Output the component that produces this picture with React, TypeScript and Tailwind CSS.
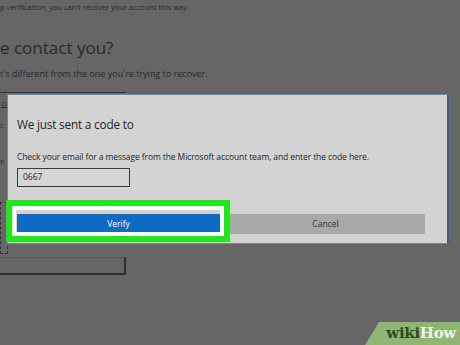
export default function App() {
  return (
    <div
      className="relative h-[345px] w-[460px] overflow-hidden bg-[#666666] text-[#2a2a2a]"
      style={{ fontFamily: '"Open Sans", "Noto Sans", sans-serif' }}
    >
      {/* page behind the dialog */}
      <div className="flex flex-col">
        <p className="mt-[2px] text-[7.5px] leading-[10px]">
          p verification, you can't recover your account this way.
        </p>
        <h2 className="mt-[25px] text-[17px] leading-[22px]">e contact you?</h2>
        <p className="mt-[9px] text-[9px] leading-[12px]">
          t's different from the one you're trying to recover.
        </p>
        <div className="mt-[12px] h-[22px] w-[126px] border-t border-[#333] pl-[1px] text-[8px] leading-[20px] underline">
          cc
        </div>
        <p className="mt-[6px] text-[8px] leading-[10px]">c</p>
        <p className="mt-[26px] text-[8px] leading-[10px]">e</p>
        <div className="mt-[36px] h-[52px] w-[8px] border border-dashed border-[#333]" />
        <div className="mt-[3px] h-[18px] w-[126px] border-b-2 border-r-2 border-[#2e2e2e] border-t border-t-[#555]" />
      </div>

      {/* dialog */}
      <div className="absolute left-[7px] top-[94px] flex h-[150px] w-[442px] flex-col border-t border-b border-l border-[#6d88a6] border-r-2 border-r-[#3f5e85] bg-[#d3d3d3] pl-[9px] pr-[22px] text-[#262626]">
        <h3 className="mt-[21px] text-[11.8px] leading-[16px] tracking-[-0.2px]">We just sent a code to</h3>
        <p className="mt-[19px] text-[8.5px] leading-[12px] tracking-[-0.1px]">
          Check your email for a message from the Microsoft account team, and enter the code here.
        </p>
        <div className="mt-[5px] flex h-[19px] w-[113px] items-center border border-[#3a3a3a] bg-[#d6d6d6] pl-[5px] text-[8.5px]">
          0667
        </div>
        <div className="mt-[27px] flex gap-[6px]">
          <div className="relative w-[203px]">
            <button className="flex h-[20px] w-full items-center justify-center bg-[#0e6bc4] text-[8.5px] text-white">
              Verify
            </button>
            <div className="pointer-events-none absolute -bottom-[8px] -left-[11px] -right-[10px] -top-[14px] border-[6px] border-[#22e61c] bg-transparent">
              <div className="h-full w-full border-[4px] border-white" />
            </div>
          </div>
          <button className="flex h-[20px] flex-1 items-center justify-center bg-[#a9a9a9] text-[8.5px] text-[#333]">
            Cancel
          </button>
        </div>
      </div>

      {/* wikiHow badge */}
      <div className="absolute bottom-0 right-0 flex h-[23px] w-[95px] items-center justify-end pr-[4px] [clip-path:polygon(14px_0,100%_0,100%_100%,0_100%)] bg-[#8fb573]">
        <span
          className="text-[15px] font-bold leading-none tracking-[-0.3px]"
          style={{ fontFamily: '"DejaVu Serif", "Liberation Serif", serif' }}
        >
          <span className="text-[#2f4a20]">wiki</span>
          <span className="text-[#eef3e6]">How</span>
        </span>
      </div>
    </div>
  );
}
